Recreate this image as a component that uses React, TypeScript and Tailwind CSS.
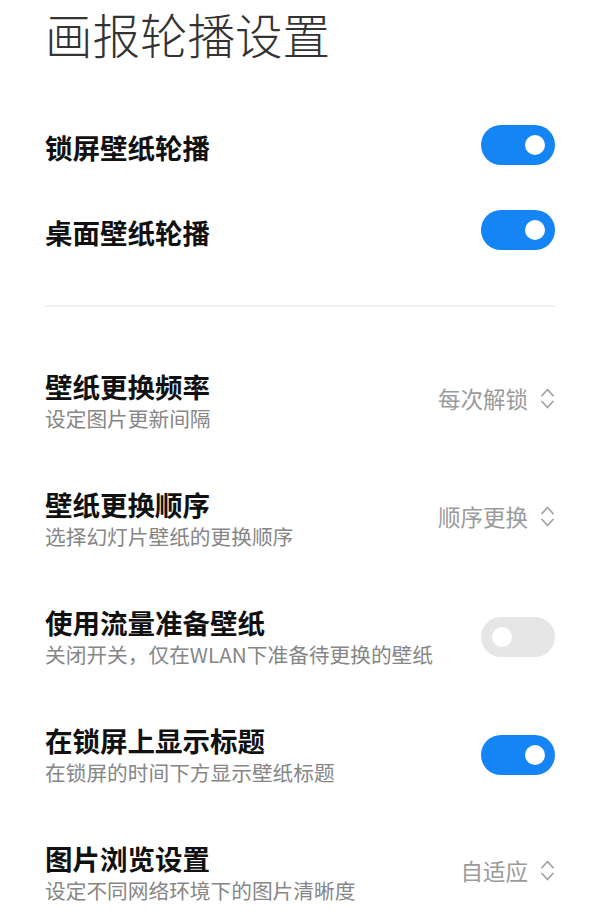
import React from "react";

const font = { fontFamily: '"Noto Sans CJK SC", "Noto Sans", sans-serif' };

function Toggle({ on }: { on: boolean }) {
  return (
    <div
      className={
        "relative h-[40px] w-[74px] shrink-0 rounded-full " +
        (on ? "bg-[#1585f5]" : "bg-[#e6e6e6]")
      }
    >
      <div
        className={
          "absolute top-[10px] h-[20px] w-[20px] rounded-full bg-white " +
          (on ? "right-[10px]" : "left-[11px]")
        }
      />
    </div>
  );
}

function Chevrons() {
  return (
    <svg width="15" height="23" viewBox="0 0 15 23" fill="none" className="shrink-0">
      <polyline points="2,8.5 7.5,2.5 13,8.5" stroke="#a3a3a3" strokeWidth="1.8" strokeLinecap="round" strokeLinejoin="round" />
      <polyline points="2,14.5 7.5,20.5 13,14.5" stroke="#a3a3a3" strokeWidth="1.8" strokeLinecap="round" strokeLinejoin="round" />
    </svg>
  );
}

function SimpleRow({ title }: { title: string }) {
  return (
    <div className="flex h-[85px] items-center justify-between">
      <div className="pt-[4px] text-[27.5px] font-bold leading-[34px] text-[#111]">{title}</div>
      <Toggle on={true} />
    </div>
  );
}

function TwoLineRow({
  title,
  sub,
  right,
}: {
  title: string;
  sub: string;
  right: React.ReactNode;
}) {
  return (
    <div className="flex h-[118px] items-center justify-between">
      <div className="flex flex-col">
        <div className="text-[27.5px] font-bold leading-[34px] text-[#111]">{title}</div>
        <div className="text-[20.7px] leading-[30px] text-[#868686]">{sub}</div>
      </div>
      {right}
    </div>
  );
}

function Value({ text }: { text: string }) {
  return (
    <div className="mb-[6px] flex items-center gap-[12px]">
      <span className="text-[22.5px] leading-[30px] text-[#9a9a9a]">{text}</span>
      <Chevrons />
    </div>
  );
}

export default function App() {
  return (
    <div className="h-[923px] w-[600px] overflow-hidden bg-white px-[45px]" style={font}>
      <div className="pt-[4px] text-[47.5px] font-light leading-[60px] text-[#333]">画报轮播设置</div>
      <div className="mt-[38px]">
        <SimpleRow title="锁屏壁纸轮播" />
        <SimpleRow title="桌面壁纸轮播" />
      </div>
      <div className="mt-[33px] h-[2px] bg-[#f0f0f0]" />
      <div className="mt-[35px]">
        <TwoLineRow title="壁纸更换频率" sub="设定图片更新间隔" right={<Value text="每次解锁" />} />
        <TwoLineRow title="壁纸更换顺序" sub="选择幻灯片壁纸的更换顺序" right={<Value text="顺序更换" />} />
        <TwoLineRow
          title="使用流量准备壁纸"
          sub="关闭开关，仅在WLAN下准备待更换的壁纸"
          right={<Toggle on={false} />}
        />
        <TwoLineRow title="在锁屏上显示标题" sub="在锁屏的时间下方显示壁纸标题" right={<Toggle on={true} />} />
        <TwoLineRow title="图片浏览设置" sub="设定不同网络环境下的图片清晰度" right={<Value text="自适应" />} />
      </div>
    </div>
  );
}
